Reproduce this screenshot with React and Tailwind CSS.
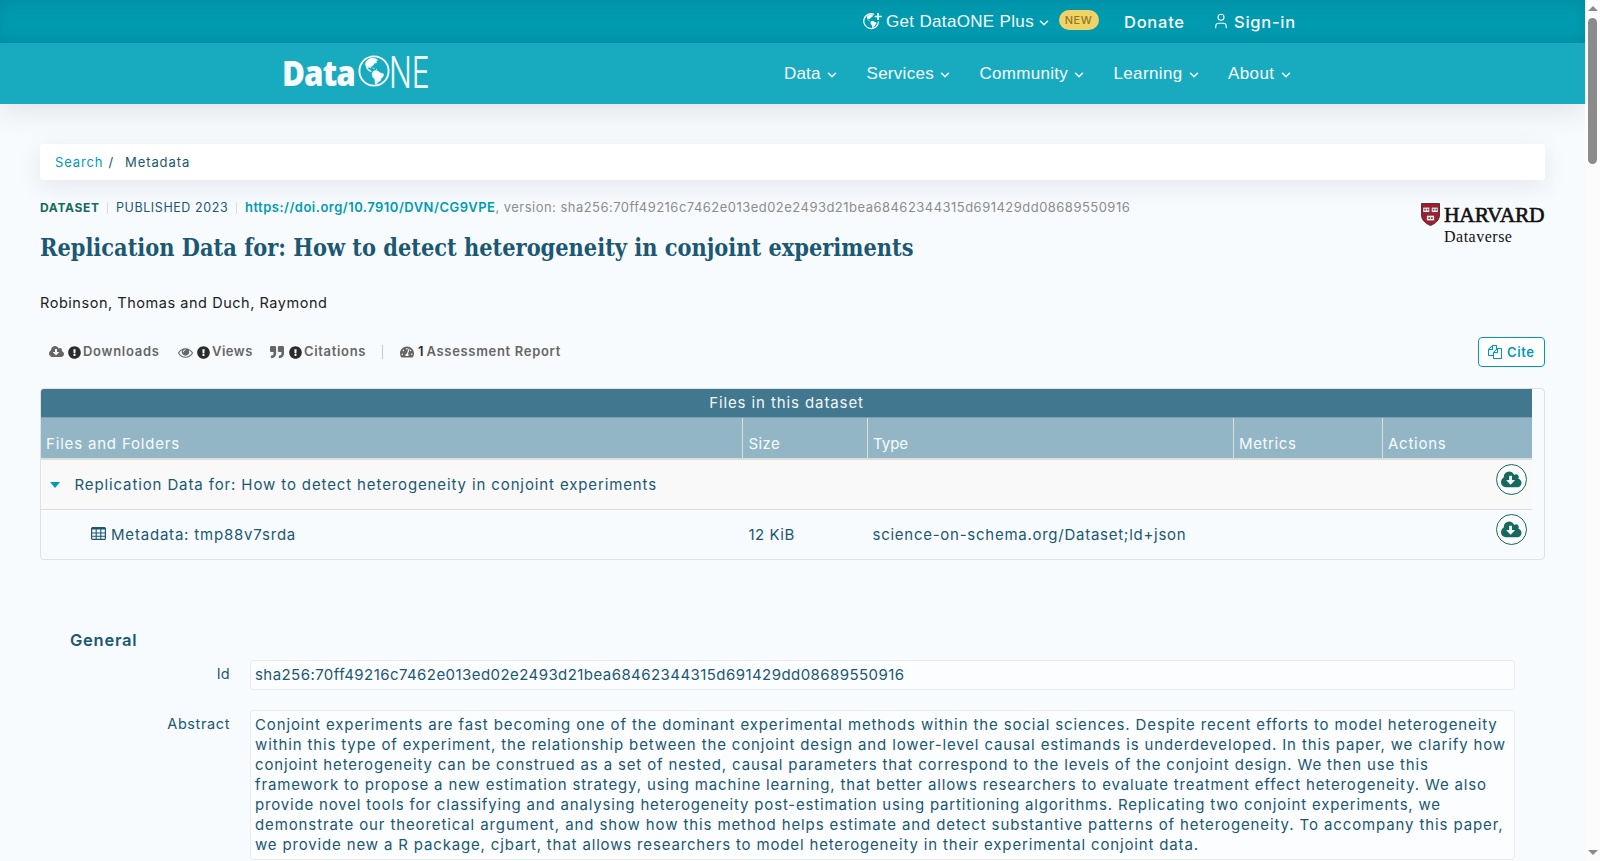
import { ChevronDown, User } from "lucide-react";
import { FaQuoteRight, FaTachometerAlt, FaExclamationCircle } from "react-icons/fa";

const CloudDownload = ({ className }) => (
  <svg viewBox="0 0 1920 1792" fill="currentColor" fillRule="evenodd" preserveAspectRatio="none" className={className}>
    <path d="M1280 928q0-14-9-23t-23-9h-224v-352q0-13-9.5-22.5t-22.5-9.5h-192q-13 0-22.5 9.5t-9.5 22.5v352h-224q-13 0-22.5 9.5t-9.5 22.5q0 14 9 23l352 352q9 9 23 9t23-9l351-351q10-12 10-24zM1920 1152q0 159-112.5 271.5t-271.5 112.5h-1088q-185 0-316.5-131.5t-131.5-316.5q0-130 70-240t188-165q-2-30-2-43 0-212 150-362t362-150q156 0 285.5 87t188.5 231q71-62 166-62 106 0 181 75t75 181q0 76-41 138 130 31 213.5 135.5t83.5 238.5z" />
  </svg>
);

const Files = ({ className }) => (
  <svg viewBox="0 0 1792 1792" fill="currentColor" className={className}>
    <path d="M1696 384q40 0 68 28t28 68v1216q0 40-28 68t-68 28h-960q-40 0-68-28t-28-68v-288h-544q-40 0-68-28t-28-68v-672q0-40 20-88t48-76l408-408q28-28 76-48t88-20h416q40 0 68 28t28 68v328q68-40 128-40h416zm-544 213l-299 299h299v-299zm-640-384l-299 299h299v-299zm196 647l316-316v-416h-384v416q0 40-28 68t-68 28h-416v640h512v-256q0-40 20-88t48-76zm956 804v-1152h-384v416q0 40-28 68t-68 28h-416v640h896z" />
  </svg>
);

const Eye = ({ className }) => (
  <svg viewBox="0 0 1792 1792" fill="currentColor" className={className}>
    <path d="M1664 960q-152-236-381-353 61 104 61 225 0 185-131.5 316.5t-316.5 131.5-316.5-131.5-131.5-316.5q0-121 61-225-229 117-381 353 133 205 333.5 326.5t434.5 121.5 434.5-121.5 333.5-326.5zm-720-384q0-20-14-34t-34-14q-125 0-214.5 89.5t-89.5 214.5q0 20 14 34t34 14 34-14 14-34q0-86 61-147t147-61q20 0 34-14t14-34zm848 384q0 34-20 69-140 230-376.5 368.5t-499.5 138.5-499.5-139-376.5-368q-20-35-20-69t20-69q140-229 376.5-368t499.5-139 499.5 139 376.5 368q20 35 20 69z" />
  </svg>
);

const TableIcon = ({ className }) => (
  <svg viewBox="0 0 15 13" fill="none" stroke="currentColor" className={className}>
    <rect x=".6" y=".6" width="13.8" height="11.8" rx="1" strokeWidth="1.2" />
    <path d="M1 1.6h13" strokeWidth="2" />
    <path d="M1 6h13M1 9.2h13M5.2 2v10M9.8 2v10" strokeWidth="1.1" />
  </svg>
);

const LAND =
  "M7.2 9.2C8 6.2 11 3.600 14.400 3.100l3.200.6 2 1.400-1.600 1 .6 1.600-2.400.6-1.200 2-1.800.9-.6 1.600-1.600-.9-1.200.7.3 1.800 1.800.6 1.400 1.700-2.200-.8-2.100-1.900-1-3.300zM15.400 16.200l2.400-.7 2.400.8 1.600 1.500 3.700 1.200-.4 2.600-2 1.600-.7 2.500-2.200 1-1.500 2.200-1.300.3-.6-5-2.300-2.600-.3-3z";

const Globe = ({ className }) => (
  <svg viewBox="0 0 32 32" fill="none" className={className}>
    <circle cx="16" cy="16" r="14.600" stroke="currentColor" strokeWidth="1.900" />
    <path d={LAND} fill="currentColor" stroke="currentColor" strokeWidth=".6" />
    <path d="M14.500 12.800l2 .8M18 14l1 .6" stroke="currentColor" strokeWidth=".7" />
  </svg>
);

const GlobePlus = ({ className }) => (
  <svg viewBox="0 0 36 34" fill="none" className={className}>
    <path d="M21 3.400A14 14 0 1 0 29.500 17" stroke="currentColor" strokeWidth="2.400" />
    <path d={LAND} fill="currentColor" />
    <path d="M28.500 1v13M22 7.500h13.500" stroke="currentColor" strokeWidth="3" />
  </svg>
);

const Shield = ({ className }) => (
  <svg viewBox="0 0 19 23" className={className}>
    <path d="M.5.5h18V12c0 5-4 8.500-9 10.500C4.500 20.500.5 17 .5 12z" fill="#a51c30" stroke="#4a2a30" strokeWidth=".9" />
    <g fill="#f3e9ea" stroke="#3a2226" strokeWidth=".4">
      <rect x="2" y="4.200" width="6.600" height="5" />
      <rect x="10.400" y="4.200" width="6.600" height="5" />
      <rect x="5.700" y="12.400" width="7.600" height="5.400" />
    </g>
    <path d="M3.200 6.700h1.500M5.800 6.700h1.500M11.800 6.700h1.500M14.400 6.700h1.500M7.400 15.200h1.700M10 15.200h1.700" stroke="#6b4a4e" strokeWidth="1.800" />
  </svg>
);

const nav = [
  ["Data", "w-[82.500px] tracking-[0.145px]"],
  ["Services", "w-[113px] tracking-[0.289px]"],
  ["Community", "w-[134px] tracking-[0.281px]"],
  ["Learning", "w-[114.500px] tracking-[0.354px]"],
  ["About", "w-[70px] tracking-[0.412px]"],
];

const Chevron = () => <ChevronDown className="mt-[3px] size-[14px]" strokeWidth={2.7} />;

function Header() {
  return (
    <header className="text-[#f8fbfe] shadow-[0_6px_28px_rgba(60,70,80,0.14)]">
      <div className="flex h-[43px] items-center bg-[#009bb0] pl-[863px] shadow-[inset_0_-8px_12px_-4px_rgba(0,120,140,0.35),inset_0_8px_16px_-4px_rgba(0,120,140,0.35)]">
        <div className="flex w-[261px] items-center">
          <GlobePlus className="mr-[4px] size-[19px] shrink-0" />
          <span className="shrink-0 font-['Liberation_Sans',sans-serif] text-[17px] tracking-[0.333px]">Get DataONE Plus</span>
          <span className="ml-[2.500px]"><Chevron /></span>
          <span className="mt-[-3px] ml-[8px] flex h-[20px] w-[40px] items-center justify-center rounded-full bg-[#f0d267] text-[11px] font-medium tracking-[0.5px] text-[#8f7a22]">NEW</span>
        </div>
        <span className="w-[88px] pt-[2px] text-[16.500px] font-medium tracking-[0.75px]">Donate</span>
        <User className="mt-[-1px] mr-[4px] size-[18px]" strokeWidth={1.500} />
        <span className="pt-[2px] text-[16.500px] font-medium tracking-[0.75px]">Sign-in</span>
      </div>
      <div className="flex h-[61px] items-center bg-[#18abc0] pl-[282px]">
        <div className="flex w-[502px] items-center" aria-label="DataONE">
          <span className="mt-[-2px] w-[75.500px] origin-left scale-x-[0.87] font-['Open_Sans',sans-serif] text-[36px] leading-[40px] font-extrabold tracking-[-1px] whitespace-nowrap">Data</span>
          <Globe className="mt-[-5px] size-[32px] shrink-0" />
          <span className="mt-[-4px] ml-[-1px] origin-left scale-x-[0.7] font-['Inter',sans-serif] text-[43px] leading-[44px] font-light">NE</span>
        </div>
        {nav.map(([t, c]) => (
          <div key={t} className={"flex items-center font-['Liberation_Sans',sans-serif] text-[17px] " + c}>
            <span className="mr-[4px]">{t}</span>
            <Chevron />
          </div>
        ))}
      </div>
    </header>
  );
}

const Metric = ({ icon, label, className }) => (
  <div className={"flex h-4 items-center " + className}>
    <span className="mr-[4px] flex w-[15px] shrink-0 text-[#666]">{icon}</span>
    <FaExclamationCircle className="mr-[2px] size-[13px] shrink-0 text-[#2b2b2b]" />
    <span>{label}</span>
  </div>
);

const DownloadButton = () => (
  <span className="mt-1 mr-[5px] ml-auto flex size-[31px] items-center justify-center rounded-full border border-[#15695f] bg-[#fcfdfe] text-[#15695f]">
    <CloudDownload className="h-[20px] w-[20.500px]" />
  </span>
);

const COLS = "grid grid-cols-[701px_125px_366px_149px_150px]";

function FilesTable() {
  return (
    <section className="mt-[21px] h-[172px] overflow-hidden rounded-[4px] border border-[#dfe2e4] text-[15px] text-[#1a5873]">
      <div className="w-[1491px]">
        <div className="h-7 bg-[#41778f] text-center leading-[27px] tracking-[0.9px] text-[#f4f8fa]">Files in this dataset</div>
        <div className={COLS + " h-[43px] border-t border-b-2 border-t-[#7d9fae] border-b-[#dddddd] bg-[#92b6c5] leading-5 text-[#f8fbfe]"}>
          <div className="pt-[15.500px] pl-[5px] tracking-[0.82px]">Files and Folders</div>
          <div className="border-l border-[#dddddd] pt-[15.500px] pl-[5.500px] tracking-[0.355px]">Size</div>
          <div className="border-l border-[#dddddd] pt-[15.500px] pl-[5px]">Type</div>
          <div className="border-l border-[#dddddd] pt-[15.500px] pl-[5px] tracking-[0.6px]">Metrics</div>
          <div className="border-l border-[#dddddd] pt-[15.500px] pl-[5px] tracking-[0.75px]">Actions</div>
        </div>
        <div className="flex h-[50px] border-b border-[#dddddd] bg-[#f9f9f9]">
          <span className="mt-[22px] ml-[9px] size-0 border-x-[5px] border-t-[6px] border-x-transparent border-t-[#009bb0]" />
          <span className="ml-[14.500px] leading-[49px] tracking-[0.878px]">Replication Data for: How to detect heterogeneity in conjoint experiments</span>
          <DownloadButton />
        </div>
        <div className={COLS + " h-[49px] leading-[49px]"}>
          <div className="flex items-center pl-[50px] tracking-[0.8px]">
            <TableIcon className="mt-[-2px] mr-[5px] h-[13px] w-[15px]" />
            Metadata: tmp88v7srda
          </div>
          <div className="pl-[6.500px] tracking-[0.5px]">12 KiB</div>
          <div className="pl-[5.500px] tracking-[0.74px]">science-on-schema.org/Dataset;ld+json</div>
          <div />
          <div className="flex items-start"><DownloadButton /></div>
        </div>
      </div>
    </section>
  );
}

const abstract = [
  ["tracking-[0.881px]", "Conjoint experiments are fast becoming one of the dominant experimental methods within the social sciences. Despite recent efforts to model heterogeneity"],
  ["tracking-[0.862px]", "within this type of experiment, the relationship between the conjoint design and lower-level causal estimands is underdeveloped. In this paper, we clarify how"],
  ["tracking-[0.851px]", "conjoint heterogeneity can be construed as a set of nested, causal parameters that correspond to the levels of the conjoint design. We then use this"],
  ["tracking-[0.854px]", "framework to propose a new estimation strategy, using machine learning, that better allows researchers to evaluate treatment effect heterogeneity. We also"],
  ["tracking-[0.815px]", "provide novel tools for classifying and analysing heterogeneity post-estimation using partitioning algorithms. Replicating two conjoint experiments, we"],
  ["tracking-[0.885px]", "demonstrate our theoretical argument, and show how this method helps estimate and detect substantive patterns of heterogeneity. To accompany this paper,"],
  ["tracking-[0.842px]", "we provide new a R package, cjbart, that allows researchers to model heterogeneity in their experimental conjoint data."],
];

const BOX = "w-[1265px] rounded-[3px] border border-[#ebecee] bg-[#fcfdfe] px-[4px] py-[4px] text-[15px] leading-5 whitespace-nowrap";

function General() {
  return (
    <section className="mt-[70px] pl-[30px] text-[#1a5873]">
      <h2 className="h-[30px] text-[16.500px] leading-[20px] font-semibold tracking-[0.75px]">General</h2>
      <div className="flex">
        <div className="mr-5 w-[160px] pt-[4px] text-right text-[14.500px] leading-5 tracking-[0.3px]">Id</div>
        <div className={BOX + " h-[30px] tracking-[0.436px]"}>sha256:70ff49216c7462e013ed02e2493d21bea68462344315d691429dd08689550916</div>
      </div>
      <div className="mt-5 flex">
        <div className="mr-5 w-[160px] pt-[4px] text-right text-[14.500px] leading-5 tracking-[0.6px]">Abstract</div>
        <div className={BOX}>
          {abstract.map(([c, t]) => <div key={t} className={c}>{t}</div>)}
        </div>
      </div>
    </section>
  );
}

export default function App() {
  return (
    <div className="flex h-[861px] w-[1600px] overflow-hidden bg-[#f8fbfe] font-['Inter',sans-serif]">
      <div className="w-[1585px] shrink-0">
        <Header />
        <main className="px-[40px] pt-[40px]">
          <nav className="flex h-9 items-center rounded-[3px] bg-white pt-[2px] pl-[15px] text-[13px] text-[#1a5873] shadow-[0_6px_24px_rgba(60,70,80,0.11)]">
            <span className="w-[53.500px] tracking-[0.85px] text-[#009bb0]">Search</span>
            <span className="w-[16.500px]">/</span>
            <span className="tracking-[0.92px]">Metadata</span>
          </nav>
          <div className="flex h-[110px] justify-between">
            <div>
              <div className="mt-[18px] flex h-5 items-center text-[13px] whitespace-nowrap">
                <span className="w-[67px] text-[12px] font-bold tracking-[0.68px] text-[#15695f]">DATASET</span>
                <span className="mr-[8px] h-3 w-px bg-[#dddddd]" />
                <span className="w-[120px] text-[12.500px] tracking-[0.58px] text-[#1a5873]">PUBLISHED 2023</span>
                <span className="mr-[8px] h-3 w-px bg-[#dddddd]" />
                <span className="font-semibold tracking-[0.485px] text-[#009bb0]">https://doi.org/10.7910/DVN/CG9VPE</span>
                <span className="tracking-[0.475px] text-[#8c8c8c]">, version: sha256:70ff49216c7462e013ed02e2493d21bea68462344315d691429dd08689550916</span>
              </div>
              <h1 className="mt-[14px] font-['DejaVu_Serif_Condensed','DejaVu_Serif',serif] text-[23.300px] leading-[32px] font-bold whitespace-nowrap text-[#1a5873] [font-stretch:condensed]">
                Replication Data for: How to detect heterogeneity in conjoint experiments
              </h1>
            </div>
            <div className="mt-[23px] flex h-[42px] w-[124px]">
              <Shield className="mr-[4px] h-[23px] w-[19px] shrink-0" />
              <div className="font-['Liberation_Serif',serif] text-[#111]">
                <div className="text-[21.500px] leading-[24px] tracking-[-0.2px] [-webkit-text-stroke:0.6px_#111]">HARVARD</div>
                <div className="text-[16px] leading-[20px] tracking-[0.5px]">Dataverse</div>
              </div>
            </div>
          </div>
          <div className="mt-[3px] h-5 text-[14.500px] leading-5 tracking-[0.54px] text-[#222]">Robinson, Thomas and Duch, Raymond</div>
          <div className="mt-[24px] flex h-[30px] justify-between">
            <div className="flex items-center pl-[9px] text-[13px] font-semibold text-[#666]">
              <Metric className="w-[129px] tracking-[0.72px]" icon={<CloudDownload className="h-[14px] w-[15px]" />} label="Downloads" />
              <Metric className="w-[92px] tracking-[0.5px]" icon={<Eye className="size-[15px]" />} label="Views" />
              <Metric className="w-[112px] tracking-[0.66px]" icon={<FaQuoteRight className="size-[14px]" />} label="Citations" />
              <span className="h-[14px] w-px bg-[#c4c8ca]" />
              <div className="ml-[17px] flex items-center">
                <FaTachometerAlt className="mr-[4px] size-[14px]" />
                <span className="mr-[3px] text-[#2b2b2b]">1</span>
                <span className="tracking-[0.68px]">Assessment Report</span>
              </div>
            </div>
            <button className="flex h-[30px] w-[67px] items-center rounded-[4px] border border-[#009bb0] bg-white pl-[9px] text-[13px] font-semibold tracking-[0.6px] text-[#009bb0]">
              <Files className="mr-[5px] size-[14px]" />
              <span className="pt-[2px]">Cite</span>
            </button>
          </div>
          <FilesTable />
          <General />
        </main>
      </div>
      <div className="flex w-[15px] shrink-0 flex-col items-center bg-[#fcfcfc]">
        <span className="mt-[6px] size-0 border-x-[5px] border-b-[5px] border-x-transparent border-b-[#8b8b8b]" />
        <span className="mt-[7px] h-[146px] w-[9px] rounded-full bg-[#8b8b8b]" />
        <span className="mt-auto mb-[6px] size-0 border-x-[5px] border-t-[5px] border-x-transparent border-t-[#8b8b8b]" />
      </div>
    </div>
  );
}
